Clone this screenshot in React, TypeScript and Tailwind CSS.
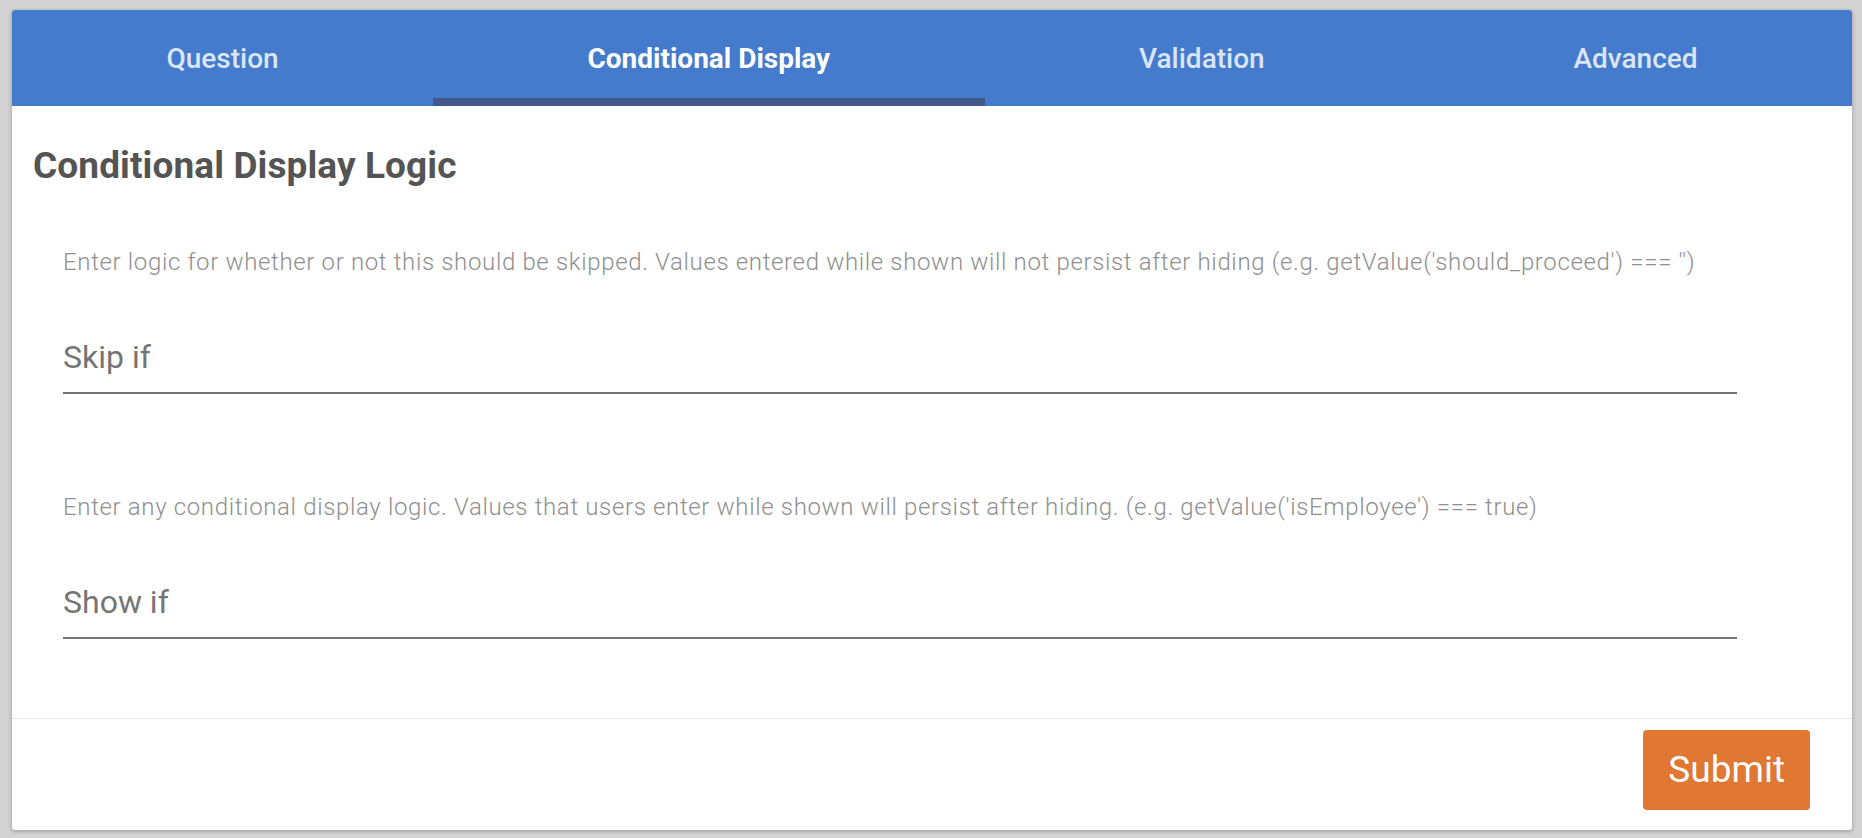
import { useState } from "react"

const TABS = ["Question", "Conditional Display", "Validation", "Advanced"]

function Field({ hint, label }: { hint: string; label: string }) {
    return (
        <div className="flex flex-col">
            <p className="text-[24px] leading-[24px] font-light tracking-[0.65px] text-[#8f8f8f] whitespace-nowrap">{hint}</p>
            <div className="mt-[67px] pb-[19px] border-b-2 border-[#757575]">
                <span className="block text-[32px] leading-[32px] text-[#757575]">{label}</span>
            </div>
        </div>
    )
}

export default function App() {
    const [active, setActive] = useState(1)

    return (
        <div
            className="h-screen bg-[#d3d3d3] pl-[12px] pr-[10px] pt-[10px] pb-[8px]"
            style={{ fontFamily: "Roboto, 'Noto Sans', sans-serif" }}
        >
            <div className="flex h-[820px] flex-col overflow-hidden rounded-[3px] bg-white shadow-[0_1px_4px_rgba(0,0,0,0.3)]">
                {/* tab bar */}
                <div className="flex h-[96px] shrink-0 bg-[#447bcd]">
                    {TABS.map((tab, i) => (
                        <button
                            key={tab}
                            onClick={() => setActive(i)}
                            className={
                                i === active
                                    ? "flex flex-auto items-center justify-center pt-[2px] text-[28px] font-bold text-white shadow-[inset_0_-8px_0_#425a8a]"
                                    : "flex flex-auto items-center justify-center pt-[2px] text-[28px] font-medium text-[#dbe5f5]"
                            }
                        >
                            {tab}
                        </button>
                    ))}
                </div>

                {/* body */}
                <div className="flex-1 px-[21px]">
                    <h2 className="mt-[41px] text-[37px] leading-[37px] font-bold tracking-[0.1px] text-[#545454]">
                        Conditional Display Logic
                    </h2>

                    <div className="ml-[30px] mt-[66px] w-[1674px]">
                        <Field
                            hint="Enter logic for whether or not this should be skipped. Values entered while shown will not persist after hiding (e.g. getValue('should_proceed') === '')"
                            label="Skip if"
                        />
                        <div className="mt-[101px]">
                            <Field
                                hint="Enter any conditional display logic. Values that users enter while shown will persist after hiding. (e.g. getValue('isEmployee') === true)"
                                label="Show if"
                            />
                        </div>
                    </div>
                </div>

                {/* footer */}
                <div className="flex h-[112px] shrink-0 justify-end border-t border-[#e6e6e6] pt-[11px] pr-[42px]">
                    <button className="h-[80px] rounded-[4px] bg-[#e07733] px-[25px] text-[37px] text-white">
                        Submit
                    </button>
                </div>
            </div>
        </div>
    )
}
